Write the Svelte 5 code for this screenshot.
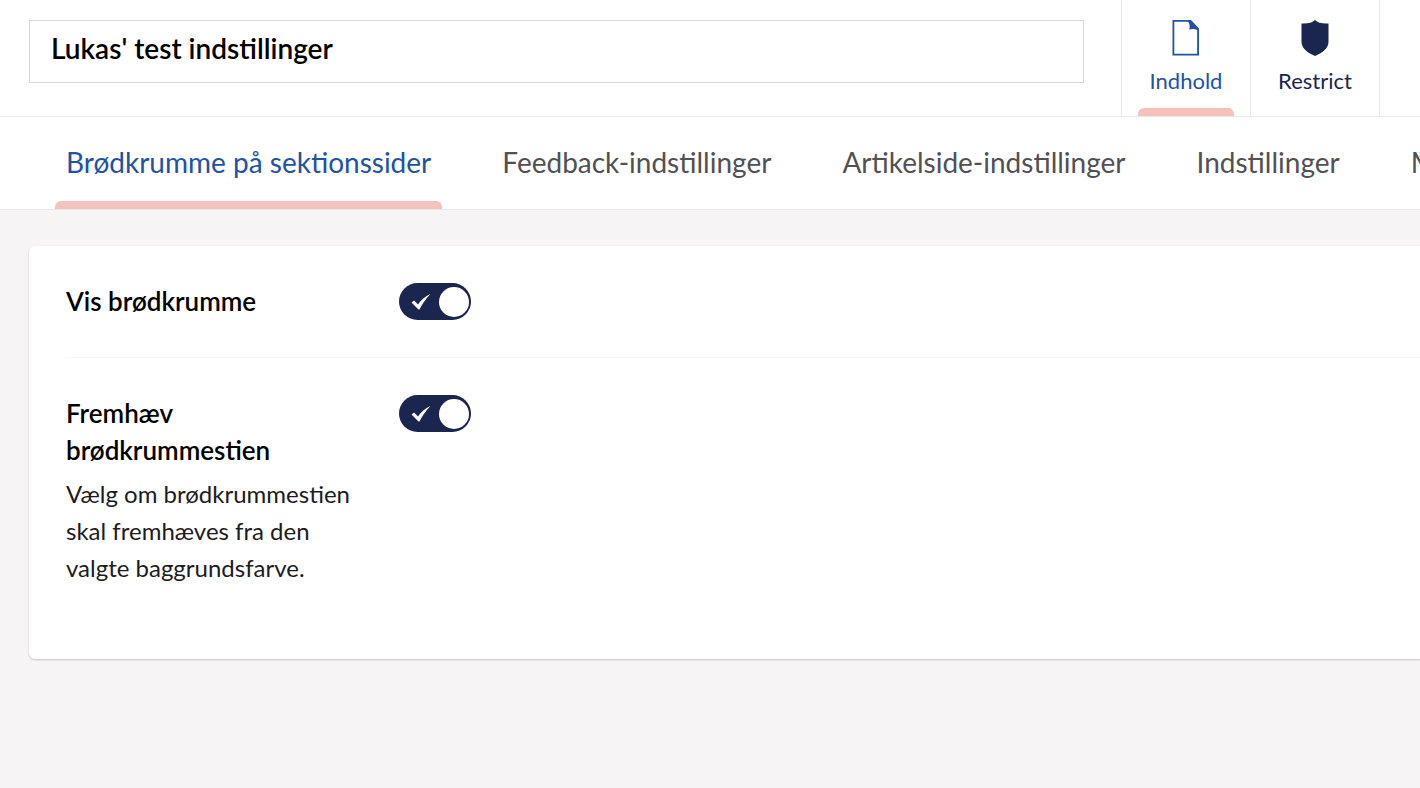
<script>
  let name = "Lukas' test indstillinger";
  let activeApp = 'content';
  let activeTab = 0;

  const tabs = [
    'Brødkrumme på sektionssider',
    'Feedback-indstillinger',
    'Artikelside-indstillinger',
    'Indstillinger',
    'M',
  ];

  let properties = [
    { alias: 'showBreadcrumb', label: 'Vis brødkrumme', value: true },
    {
      alias: 'highlightBreadcrumb',
      label: 'Fremhæv brødkrummestien',
      description: 'Vælg om brødkrummestien skal fremhæves fra den valgte baggrundsfarve.',
      value: true,
    },
  ];
</script>


<header>
  <input class="name" type="text" aria-label="Navn" bind:value={name} />
  <nav class="apps">
    <button class="app" class:active={activeApp === 'content'} on:click={() => activeApp = 'content'}>
      <svg width="36" height="36" viewBox="0 0 36 36">
        <path d="M4.500 0H23L31 8.500V35.500H4.500V0Z M6.300 1.700V33.800H29.200V10C27 8.900 24.500 8.600 21.200 9.500C22 6.500 21.800 4 20.200 1.700Z" fill="currentColor" fill-rule="evenodd" />
      </svg>
      <span>Indhold</span>
    </button>
    <button class="app" class:active={activeApp === 'restrict'} on:click={() => activeApp = 'restrict'}>
      <svg width="36" height="36" viewBox="0 0 36 36">
        <path d="M18 0C20.500 2.600 25.500 4 31.500 3.500V22C31.500 28.500 25 33 18 36C11 33 4.500 28.500 4.500 22V3.500C10.500 4 15.500 2.600 18 0Z" fill="currentColor" />
      </svg>
      <span>Restrict</span>
    </button>
  </nav>
</header>

<nav class="tabs">
  {#each tabs as tab, i}
    <button class="tab" class:active={activeTab === i} on:click={() => activeTab = i}>{tab}</button>
  {/each}
</nav>

<main>
  <div class="box">
    {#each properties as prop}
      <div class="property">
        <div class="info">
          <label for={prop.alias}>{prop.label}</label>
          {#if prop.description}
            <p>{prop.description}</p>
          {/if}
        </div>
        <div class="toggle">
          <input id={prop.alias} type="checkbox" bind:checked={prop.value} />
          <svg class="check" width="20" height="16" viewBox="0 0 20 16">
            <path d="M0.500 8.500L3 6.500L7 10.500C10 6 14 2.500 19.500 0C15 4.500 11.500 9.500 8.500 15.500H7.500Z" fill="#fff" />
          </svg>
          <span class="knob"></span>
        </div>
      </div>
    {/each}
  </div>
</main>


<style>
  :global(body) {
    background-color: #f6f4f5;
    font-family: Lato, "Liberation Sans", sans-serif;
    color: #000;
  }

  button, input {
    font-family: inherit;
    margin: 0;
  }

  button {
    position: relative;
    border: 0;
    background: none;
    cursor: pointer;
  }

  header {
    display: flex;
    height: 116px;
    padding-right: 40px;
    background-color: #fff;
    border-bottom: 1px solid #e9e9eb;
  }

  .name {
    flex: 1;
    min-width: 0;
    height: 63px;
    box-sizing: border-box;
    margin: 20px 37px 0 29px;
    padding: 0 21px 8px;
    border: 1px solid #d8d7d9;
    background-color: #fff;
    color: #000;
    font-size: 28px;
    font-weight: 600;
  }

  .apps {
    display: flex;
    border-right: 1px solid #e9e9eb;
  }

  .app {
    display: flex;
    flex-direction: column;
    align-items: center;
    gap: 11px;
    width: 129px;
    padding: 20px 0 0;
    border-left: 1px solid #e9e9eb;
    color: #1b264f;
    font-size: 22px;
    line-height: 28px;
  }

  .tabs {
    display: flex;
    gap: 49px;
    height: 92px;
    padding-left: 55px;
    overflow: hidden;
    background-color: #fff;
    border-bottom: 1px solid #e9e9eb;
  }

  .tab {
    flex: none;
    padding: 0 11px 2px;
    color: #515054;
    font-size: 28px;
    white-space: nowrap;
  }

  .active {
    color: #2152a3;
  }

  .active::after {
    content: '';
    position: absolute;
    left: 0;
    right: 0;
    bottom: 0;
    height: 8px;
    border-radius: 6px 6px 0 0;
    background-color: #f5c1bc;
  }
  .app.active::after {
    left: 16px;
    right: 16px;
  }

  main {
    padding: 36px 0 36px 29px;
  }

  .box {
    padding: 0 0 36px 37px;
    background-color: #fff;
    border-radius: 6px 0 0 6px;
    box-shadow: 0 1px 2px rgba(0, 0, 0, .2);
  }

  .property {
    display: flex;
    gap: 37px;
    padding: 37px 0;
  }

  .property + .property {
    border-top: 1px solid #f6f4f5;
  }

  .info {
    width: 296px;
    line-height: 37px;
  }

  label {
    display: block;
    font-size: 26px;
    font-weight: 600;
  }

  p {
    margin: 6px 0 0;
    color: #1c1c1e;
    font-size: 24px;
  }

  .toggle {
    display: grid;
    align-items: center;
    width: 72px;
    height: 37px;
  }

  .toggle > * {
    grid-area: 1 / 1;
  }

  .toggle input {
    appearance: none;
    width: 72px;
    height: 37px;
    border-radius: 19px;
    background-color: #bbbabf;
    cursor: pointer;
  }
  .toggle input:checked {
    background-color: #1b264f;
  }

  .check {
    margin-left: 12px;
    pointer-events: none;
  }

  .knob {
    width: 30px;
    height: 30px;
    margin-left: 4px;
    border-radius: 50%;
    background-color: #fff;
    pointer-events: none;
  }

  input:checked ~ .knob {
    margin-left: 40px;
  }
</style>
